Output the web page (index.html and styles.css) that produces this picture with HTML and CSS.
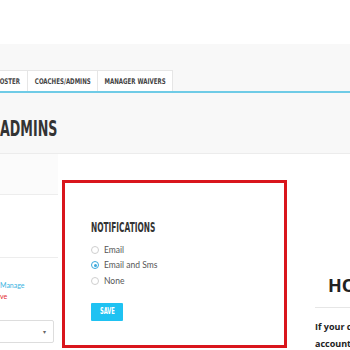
FILE: index.html
```html
<!DOCTYPE html>
<html>
<head>
<meta charset="utf-8">
<link rel="stylesheet" href="styles.css">
</head>
<body>
<header class="topbar"></header>
<div class="band">
  <nav class="tabs">
    <a class="tab tab-roster"><span class="tab-label">ROSTER</span></a>
    <a class="tab tab-coaches"><span class="tab-label">COACHES/ADMINS</span></a>
    <a class="tab tab-waivers"><span class="tab-label">MANAGER WAIVERS</span></a>
  </nav>
  <h1 class="title"><span class="title-text">ADMINS</span></h1>
</div>
<main class="content">
  <aside class="left">
    <div class="left-sec1"></div>
    <div class="left-sec2"></div>
    <p class="links"><span class="link-blue">Manage</span><br><span class="link-red">ve</span></p>
    <div class="select"><span class="caret">&#9662;</span></div>
  </aside>
  <section class="notif">
    <h2 class="notif-title"><span class="notif-title-text">NOTIFICATIONS</span></h2>
    <ul class="options">
      <li class="option"><span class="radio"></span>Email</li>
      <li class="option"><span class="radio radio-on"></span>Email and Sms</li>
      <li class="option"><span class="radio"></span>None</li>
    </ul>
    <button class="save"><span class="save-text">SAVE</span></button>
  </section>
  <aside class="right">
    <h2 class="how">HOW IT WORKS</h2>
    <p class="how-text">If your coach doesn't have an<br>account on the site yet</p>
  </aside>
</main>
</body>
</html>
```
FILE: styles.css
```css
html, body {
  margin: 0;
  padding: 0;
  width: 350px;
  height: 350px;
  overflow: hidden;
  background: #ffffff;
}

.topbar {
  height: 44px;
  background: #ffffff;
}

.band {
  background: #f8f8f8;
  padding-top: 26px;
  padding-bottom: 13px;
  border-bottom: 1px solid #ececec;
}

.tabs {
  display: flex;
  height: 21px;
  margin-left: -12px;
  border-bottom: 2px solid #6fcbe6;
}

.tab {
  display: flex;
  align-items: center;
  justify-content: center;
  height: 21px;
  box-sizing: border-box;
  background: #ffffff;
  border: 1px solid #e6e6e6;
  border-bottom: none;
  margin-right: -1px;
}

.tab-roster { width: 40px; }
.tab-coaches { width: 71px; }
.tab-waivers { width: 76px; }

.tab-label {
  display: inline-block;
  white-space: nowrap;
  font-family: "DejaVu Sans Condensed", "DejaVu Sans", sans-serif;
  font-stretch: condensed;
  font-weight: bold;
  font-size: 7.8px;
  color: #444444;
  transform: scaleX(0.78);
  padding-top: 1px;
}

.title {
  margin: 25px 0 0 0;
  height: 22px;
  line-height: 22px;
  font-size: 22px;
  font-family: "DejaVu Sans Condensed", "DejaVu Sans", sans-serif;
  font-stretch: condensed;
  font-weight: bold;
  color: #333333;
  white-space: nowrap;
}

.title-text {
  display: inline-block;
  transform: scaleX(0.64);
  transform-origin: left center;
}

.content {
  display: flex;
  align-items: flex-start;
}

.left {
  width: 58px;
  flex-shrink: 0;
  margin-right: 4px;
}

.left-sec1 {
  height: 40px;
  background: #fbfbfb;
  border-bottom: 1px solid #ededed;
}

.left-sec2 {
  height: 62px;
  border-bottom: 1px solid #ededed;
}

.links {
  margin: 22px 0 0 0;
  font-family: "Lato", "Noto Sans", sans-serif;
  font-size: 7px;
  line-height: 11px;
}

.link-blue { color: #3bb4df; }
.link-red { color: #e3262d; }

.select {
  margin-top: 18px;
  margin-left: -4px;
  height: 23px;
  width: 58px;
  box-sizing: border-box;
  border: 1px solid #dddddd;
  border-radius: 2px;
  background: #ffffff;
  display: flex;
  align-items: center;
  justify-content: flex-end;
  padding-right: 7px;
}

.caret {
  font-family: "DejaVu Sans", sans-serif;
  font-size: 6px;
  color: #666666;
}

.notif {
  width: 225px;
  height: 168px;
  flex-shrink: 0;
  box-sizing: border-box;
  margin-top: 26px;
  border: 3px solid #d9161c;
  background: #ffffff;
  padding: 37px 0 0 26px;
}

.notif-title {
  margin: 0;
  height: 14px;
  line-height: 14px;
  font-family: "DejaVu Sans Condensed", "DejaVu Sans", sans-serif;
  font-stretch: condensed;
  font-weight: bold;
  font-size: 13.5px;
  color: #333333;
  white-space: nowrap;
}

.notif-title-text {
  display: inline-block;
  transform: scaleX(0.61);
  transform-origin: left center;
}

.options {
  list-style: none;
  margin: 8px 0 0 0;
  padding: 0;
}

.option {
  display: flex;
  align-items: center;
  height: 15.5px;
  font-family: "Lato", "Noto Sans", sans-serif;
  font-size: 8.5px;
  color: #555555;
}

.radio {
  width: 6px;
  height: 6px;
  border: 1px solid #cfcfcf;
  border-radius: 50%;
  margin-right: 5px;
  box-sizing: content-box;
  background: #ffffff;
  position: relative;
}

.radio-on {
  border-color: #3aa8dc;
}

.radio-on::after {
  content: "";
  position: absolute;
  left: 1.5px;
  top: 1.5px;
  width: 3px;
  height: 3px;
  border-radius: 50%;
  background: #3aa8dc;
}

.save {
  margin-top: 14px;
  width: 32px;
  height: 18px;
  border: none;
  border-radius: 1px;
  background: #1fc2f2;
  padding: 0;
  display: flex;
  align-items: center;
  justify-content: center;
}

.save-text {
  display: inline-block;
  font-family: "DejaVu Sans Condensed", "DejaVu Sans", sans-serif;
  font-stretch: condensed;
  font-weight: bold;
  font-size: 8px;
  color: #ffffff;
  transform: scaleX(0.72);
}

.right {
  width: 200px;
  flex-shrink: 0;
  margin-left: 28px;
  margin-top: 121px;
}

.how {
  margin: 0;
  padding: 0 0 12px 13px;
  font-family: "Open Sans", "Noto Sans", sans-serif;
  font-weight: bold;
  font-size: 18px;
  line-height: 20px;
  color: #222222;
  white-space: nowrap;
  border-bottom: 1px solid #e6e6e6;
}

.how-text {
  margin: 10px 0 0 0;
  font-family: "Open Sans", "Noto Sans", sans-serif;
  font-weight: bold;
  font-size: 9px;
  line-height: 17px;
  color: #222222;
  white-space: nowrap;
}
```
